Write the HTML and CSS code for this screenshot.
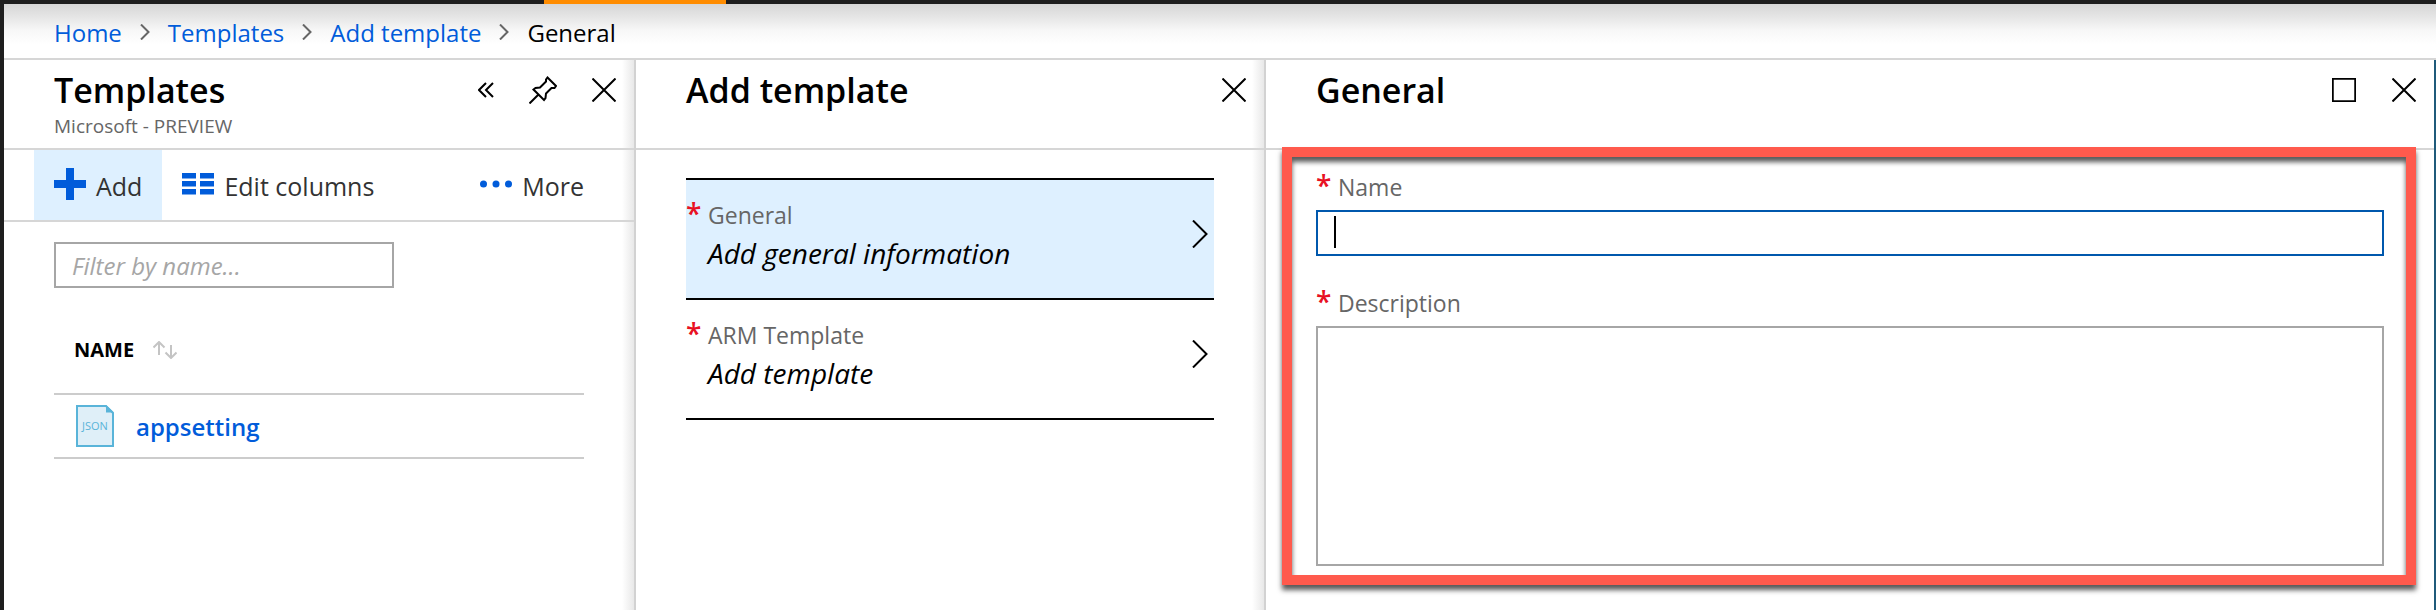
FILE: index.html
```html
<!DOCTYPE html>
<html lang="en">
<head>
<meta charset="utf-8">
<title>General - Add template</title>
<link rel="stylesheet" href="styles.css">
</head>
<body>
<div class="topbar"><div class="topbar-progress"></div></div>
<nav class="breadcrumb" aria-label="Breadcrumb">
  <a href="#">Home</a>
  <svg class="sep" viewBox="0 0 10 16"><path d="M1 0.5 8.5 8 1 15.5"/></svg>
  <a href="#">Templates</a>
  <svg class="sep" viewBox="0 0 10 16"><path d="M1 0.5 8.5 8 1 15.5"/></svg>
  <a href="#">Add template</a>
  <svg class="sep" viewBox="0 0 10 16"><path d="M1 0.5 8.5 8 1 15.5"/></svg>
  <span>General</span>
</nav>
<main class="blades">
  <section class="blade">
    <header class="blade-header">
      <div class="blade-title">
        <h2>Templates</h2>
        <p>Microsoft - PREVIEW</p>
      </div>
      <div class="blade-actions">
        <button class="icon-button" aria-label="Collapse"><svg width="16" height="16" viewBox="0 0 16 16"><path d="M8 1 1 8 8 15M15 1 8 8 15 15"/></svg></button>
        <button class="icon-button" aria-label="Pin"><svg width="28" height="28" viewBox="0 0 28 28"><path d="M.5 27.500 10 18M18.500 1.500 27 10 25.500 12 22.500 12 17 17.500 16.500 22 15 24 4.500 13.500 6.500 12 11 11.500 17 5.500 17 3.500Z"/></svg></button>
        <button class="icon-button" aria-label="Close"><svg width="24" height="24" viewBox="0 0 24 24"><path d="M.5.5 23.500 23.500M23.500.5.5 23.500"/></svg></button>
      </div>
    </header>
    <div class="toolbar">
      <button class="command command-active"><svg width="32" height="32" viewBox="0 0 32 32"><path d="M12 0h8v12h12v8H20v12h-8V20H0v-8h12z"/></svg><span>Add</span></button>
      <button class="command"><svg width="32" height="22" viewBox="0 0 32 22"><path d="M0 0h14v5.500H0zM18 0h14v5.500H18zM0 8h14v5.500H0zM18 8h14v5.500H18zM0 16h14v5.500H0zM18 16h14v5.500H18z"/></svg><span>Edit columns</span></button>
      <button class="command command-more"><svg width="32" height="8" viewBox="0 0 32 8"><circle cx="3.500" cy="4" r="3.500"/><circle cx="16" cy="4" r="3.500"/><circle cx="28.500" cy="4" r="3.500"/></svg><span>More</span></button>
    </div>
    <div class="blade-body">
      <input class="filter" type="text" placeholder="Filter by name..." aria-label="Filter by name">
      <table class="grid">
        <thead><tr><th scope="col"><span class="cell">NAME<svg class="sort" width="24" height="18" viewBox="0 0 24 18"><path d="M6 14V1M.5 6.500 6 1 11.500 6.500M18 4V17M12.500 11.500 18 17 23.500 11.500"/></svg></span></th></tr></thead>
        <tbody><tr><td><span class="cell">
          <svg width="38" height="42" viewBox="0 0 38 42"><path d="M1 1H30L37 8V41H1Z" fill="#dfeff8" stroke="#59b4d9" stroke-width="2"/><path d="M30 0 38 7.500H30Z" fill="#59b4d9"/><text x="19" y="25" text-anchor="middle" class="file-label">JSON</text></svg>
          <a class="item-link" href="#">appsetting</a></span></td></tr></tbody>
      </table>
    </div>
  </section>
  <section class="blade">
    <header class="blade-header">
      <div class="blade-title"><h2>Add template</h2></div>
      <div class="blade-actions">
        <button class="icon-button" aria-label="Close"><svg width="24" height="24" viewBox="0 0 24 24"><path d="M.5.5 23.500 23.500M23.500.5.5 23.500"/></svg></button>
      </div>
    </header>
    <div class="steps">
      <button class="step step-active">
        <span class="step-label required">General</span>
        <span class="step-value">Add general information</span>
        <svg class="step-arrow" width="16" height="28" viewBox="0 0 16 28"><path d="M1 .5 14.500 14 1 27.500"/></svg>
      </button>
      <button class="step">
        <span class="step-label required">ARM Template</span>
        <span class="step-value">Add template</span>
        <svg class="step-arrow" width="16" height="28" viewBox="0 0 16 28"><path d="M1 .5 14.500 14 1 27.500"/></svg>
      </button>
    </div>
  </section>
  <section class="blade blade-last">
    <header class="blade-header">
      <div class="blade-title"><h2>General</h2></div>
      <div class="blade-actions blade-actions-wide">
        <button class="icon-button" aria-label="Maximize"><svg width="24" height="24" viewBox="0 0 24 24"><rect x=".75" y=".75" width="22.500" height="22.500"/></svg></button>
        <button class="icon-button" aria-label="Close"><svg width="24" height="24" viewBox="0 0 24 24"><path d="M.5.5 23.500 23.500M23.500.5.5 23.500"/></svg></button>
      </div>
    </header>
    <form class="form">
      <label class="required" for="name">Name</label>
      <div class="field"><input id="name" type="text"><span class="caret"></span></div>
      <label class="required" for="description">Description</label>
      <textarea id="description"></textarea>
    </form>
  </section>
</main>
</body>
</html>
```
FILE: styles.css
```css
* { box-sizing: border-box; }
body {
  display: flex;
  flex-direction: column;
  min-height: 100vh;
  margin: 0;
  border-left: 4px solid #1e1e1e;
  background: #fff;
  color: #000;
  font-family: "Open Sans", "Noto Sans", sans-serif;
  font-size: 24px;
  line-height: 32px;
}
button, input, textarea { font: inherit; color: inherit; }
button { padding: 0; border: 0; background: none; }
a { color: #015cda; text-decoration: none; }
svg { flex: none; display: block; }

.topbar { height: 4px; margin-left: -4px; background: #1e1e1e; }
.topbar-progress { width: 182px; height: 4px; margin-left: 544px; background: #ff8c00; }

.breadcrumb {
  display: flex;
  align-items: center;
  gap: 18px;
  height: 56px;
  padding: 4px 50px 0;
  border-bottom: 2px solid #d6d6d6;
  background: linear-gradient(#d6d6d6, #e6e6e6 25%, #f8f8f8 50%, #fff 75%);
}
.sep { width: 10px; height: 16px; margin-bottom: 2px; fill: none; stroke: #666; stroke-width: 2; }

.blades { display: grid; flex: 1; grid-template-columns: 632px 630px 1fr; }
.blade {
  min-width: 0;
  border-right: 2px solid #d2d2d2;
  background: linear-gradient(to left, #e8e8e8, #fff 12px);
}
.blade-last { border-right-color: #1f5a7a; background: #fff; }
.blade-header {
  display: flex;
  justify-content: space-between;
  height: 90px;
  padding: 8px 18px 0 50px;
  border-bottom: 2px solid #d6d6d6;
}
.blade-title h2 { margin: 0; font-size: 34px; font-weight: 600; line-height: 44px; }
.blade-title p { margin: 0; color: #666; font-size: 19px; line-height: 28px; }
.blade-actions { display: flex; gap: 35px; height: 44px; align-items: center; }
.blade-actions-wide { gap: 36px; }
.icon-button svg { fill: none; stroke: #000; stroke-width: 2; }

.toolbar { display: flex; height: 72px; padding: 0 50px 0 30px; border-bottom: 2px solid #d6d6d6; }
.command { display: flex; align-items: center; gap: 10px; padding: 0 20px 2px; color: #333; font-size: 25px; }
.command svg { fill: #015cda; }
.command span { padding-top: 4px; }
.command-active { background: #def0ff; }
.command-more { margin-left: auto; padding-right: 0; }

.blade-body { padding: 20px 50px 0; }
.filter { width: 340px; height: 46px; padding: 0 16px; border: 2px solid #a6a6a6; background: #fff; }
.filter::placeholder { color: #a6a6a6; font-style: italic; opacity: 1; }
.grid { width: 100%; margin-top: 18px; border-collapse: collapse; }
.grid th, .grid td { padding: 0 20px; border-bottom: 2px solid #ccc; text-align: left; font-weight: 600; }
.grid th { height: 88px; font-size: 20px; font-weight: 700; }
.grid td { height: 64px; padding-left: 22px; }
.cell { display: flex; align-items: center; gap: 22px; }
.grid th .cell { gap: 19px; }
.item-link { padding-top: 2px; }
.sort { fill: none; stroke: #c4c4c4; stroke-width: 2; }
.file-label { fill: #59b4d9; font-size: 11px; font-weight: 400; }

.required::before {
  content: "*";
  display: inline-block;
  width: 22px;
  color: #e81123;
  font-size: 28px;
  font-weight: 600;
  line-height: 24px;
}

.steps { margin: 28px 50px 0; border-top: 2px solid #000; }
.step {
  display: grid;
  grid-template-columns: 1fr auto;
  align-content: center;
  align-items: center;
  row-gap: 6px;
  width: 100%;
  height: 120px;
  padding: 0 6px 10px 0;
  border-bottom: 2px solid #000;
  text-align: left;
}
.step-active { background: #def0ff; }
.step-label { grid-area: 1 / 1; color: #666; font-size: 23px; }
.step-value { grid-area: 2 / 1; padding-left: 22px; font-size: 28px; font-style: italic; }
.step-arrow { grid-area: 1 / 2 / 3 / 3; fill: none; stroke: #000; stroke-width: 2; }

.form {
  display: flex;
  flex-direction: column;
  position: relative;
  margin: -3px 18px 0 16px;
  padding: 14px 22px 9px 24px;
  border: 10px solid #ff5a4d;
  box-shadow: 0 5px 5px rgba(0, 0, 0, .65), inset 0 5px 5px rgba(0, 0, 0, .65);
}
.form label { height: 32px; color: #666; font-size: 23px; }
.field { position: relative; margin: 7px 0 31px; }
.field input { display: block; width: 100%; height: 46px; padding: 0 18px; border: 2px solid #0058ad; background: #fff; }
.caret { position: absolute; left: 18px; top: 6px; width: 2px; height: 32px; background: #000; }
.form textarea { height: 240px; margin-top: 7px; border: 2px solid #a6a6a6; background: #fff; resize: none; }
```
